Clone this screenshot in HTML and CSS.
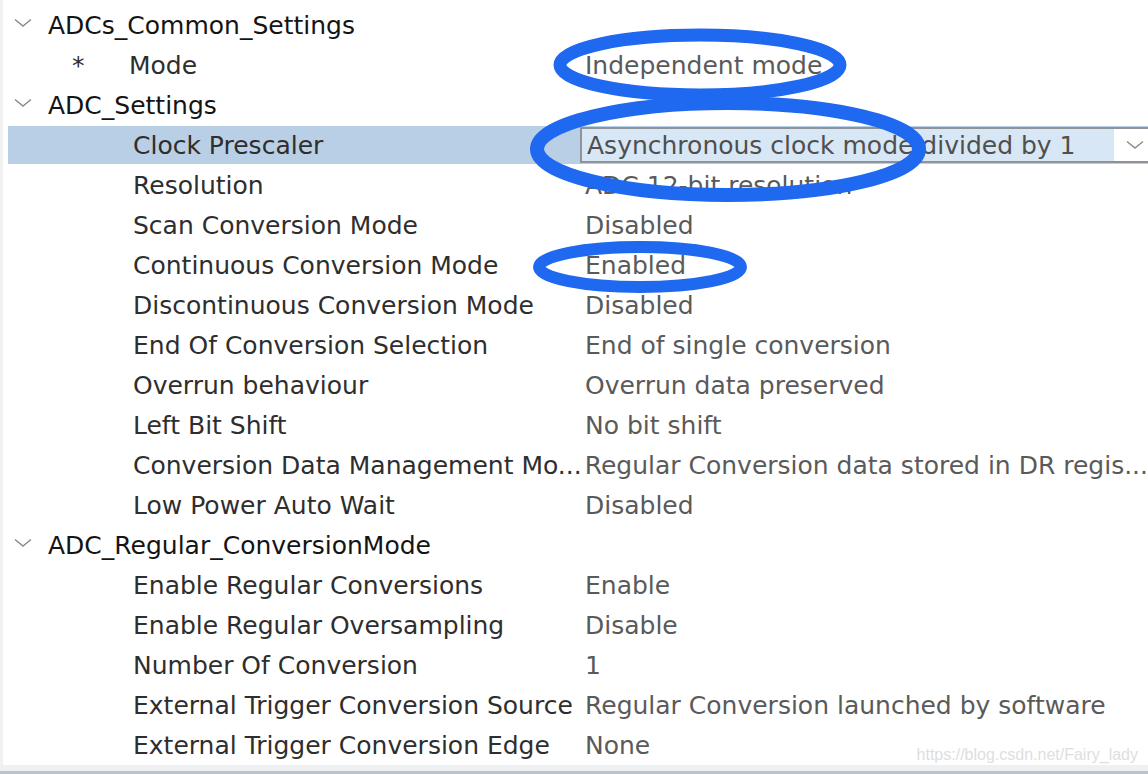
FILE: index.html
```html
<!DOCTYPE html>
<html>
<head>
<meta charset="utf-8">
<link rel="stylesheet" href="styles.css">
</head>
<body>
<div class="page">
  <div class="tree">
    <div class="row header"><span class="chev"><svg width="18" height="10" viewBox="0 0 18 10"><path d="M1 1.5 L9 8 L17 1.5" fill="none" stroke="#8a8a8a" stroke-width="1.4"/></svg></span><span class="htext">ADCs_Common_Settings</span></div>
    <div class="row item"><span class="lab mode"><span class="star">*</span>Mode</span><span class="val">Independent mode</span></div>
    <div class="row header"><span class="chev"><svg width="18" height="10" viewBox="0 0 18 10"><path d="M1 1.5 L9 8 L17 1.5" fill="none" stroke="#8a8a8a" stroke-width="1.4"/></svg></span><span class="htext">ADC_Settings</span></div>
    <div class="row item selected"><span class="lab">Clock Prescaler</span><span class="combo"><span class="ctext">Asynchronous clock mode divided by 1</span><span class="cbtn"><svg width="18" height="10" viewBox="0 0 18 10"><path d="M1 1.5 L9 8 L17 1.5" fill="none" stroke="#8a8a8a" stroke-width="1.4"/></svg></span></span></div>
    <div class="row item"><span class="lab">Resolution</span><span class="val">ADC 12-bit resolution</span></div>
    <div class="row item"><span class="lab">Scan Conversion Mode</span><span class="val">Disabled</span></div>
    <div class="row item"><span class="lab">Continuous Conversion Mode</span><span class="val">Enabled</span></div>
    <div class="row item"><span class="lab">Discontinuous Conversion Mode</span><span class="val">Disabled</span></div>
    <div class="row item"><span class="lab">End Of Conversion Selection</span><span class="val">End of single conversion</span></div>
    <div class="row item"><span class="lab">Overrun behaviour</span><span class="val">Overrun data preserved</span></div>
    <div class="row item"><span class="lab">Left Bit Shift</span><span class="val">No bit shift</span></div>
    <div class="row item"><span class="lab">Conversion Data Management Mo...</span><span class="val">Regular Conversion data stored in DR regis...</span></div>
    <div class="row item"><span class="lab">Low Power Auto Wait</span><span class="val">Disabled</span></div>
    <div class="row header"><span class="chev"><svg width="18" height="10" viewBox="0 0 18 10"><path d="M1 1.5 L9 8 L17 1.5" fill="none" stroke="#8a8a8a" stroke-width="1.4"/></svg></span><span class="htext">ADC_Regular_ConversionMode</span></div>
    <div class="row item"><span class="lab">Enable Regular Conversions</span><span class="val">Enable</span></div>
    <div class="row item"><span class="lab">Enable Regular Oversampling</span><span class="val">Disable</span></div>
    <div class="row item"><span class="lab">Number Of Conversion</span><span class="val">1</span></div>
    <div class="row item"><span class="lab">External Trigger Conversion Source</span><span class="val">Regular Conversion launched by software</span></div>
    <div class="row item"><span class="lab">External Trigger Conversion Edge</span><span class="val">None</span></div>
  </div>
  <div class="footer"></div>
  <div class="watermark">https://blog.csdn.net/Fairy_lady</div>
  <svg class="marks" width="1148" height="774" viewBox="0 0 1148 774">
    <ellipse cx="700" cy="65" rx="140" ry="30" fill="none" stroke="#1f68f0" stroke-width="13"/>
    <ellipse cx="728" cy="149" rx="191" ry="46" fill="none" stroke="#1f68f0" stroke-width="14"/>
    <ellipse cx="640" cy="267" rx="101" ry="20" fill="none" stroke="#1f68f0" stroke-width="12"/>
  </svg>
</div>
</body>
</html>
```
FILE: styles.css
```css
html, body {
  margin: 0;
  padding: 0;
  background: #ffffff;
}
.page {
  position: relative;
  width: 1148px;
  height: 774px;
  overflow: hidden;
  font-family: "DejaVu Sans", "Lucida Grande", sans-serif;
  font-size: 25px;
}
.tree {
  padding-top: 5px;
  border-left: 3px solid #f1f1f1;
  height: 760px;
}
.row {
  height: 40px;
  display: flex;
  align-items: center;
  white-space: nowrap;
}
.header {
  color: #141414;
}
.chev {
  width: 45px;
  padding-left: 11px;
  box-sizing: border-box;
  display: flex;
  align-items: center;
  margin-top: -4px;
}
.item .lab {
  width: 582px;
  padding-left: 130px;
  box-sizing: border-box;
  color: #2e2e2e;
  overflow: hidden;
}
.item .lab.mode {
  padding-left: 69px;
}
.star {
  display: inline-block;
  width: 57px;
}
.val {
  color: #5a5a5a;
}
.selected {
  background: #b9cfe6;
  margin-left: 5px;
  height: 38px;
  margin-top: 1px;
  margin-bottom: 1px;
}
.item.selected .lab {
  width: 572px;
  padding-left: 125px;
}
.combo {
  flex: 1;
  display: flex;
  height: 36px;
  border: 2px solid #8e9399;
  border-right: none;
  box-sizing: border-box;
  background: #d8e7f5;
}
.ctext {
  flex: 1;
  color: #4f4f4f;
  padding-left: 5px;
  display: flex;
  align-items: center;
  overflow: hidden;
}
.cbtn {
  width: 30px;
  background: #ffffff;
  display: flex;
  align-items: center;
  justify-content: flex-end;
  padding-right: 4px;
}
.footer {
  height: 6px;
  background: #eff0f2;
  border-bottom: 3px solid #b8c3ca;
}
.watermark {
  position: absolute;
  right: 10px;
  top: 746px;
  font-family: "Liberation Sans", Arial, sans-serif;
  font-size: 16px;
  color: #dedede;
}
.marks {
  position: absolute;
  left: 0;
  top: 0;
  pointer-events: none;
}
```
